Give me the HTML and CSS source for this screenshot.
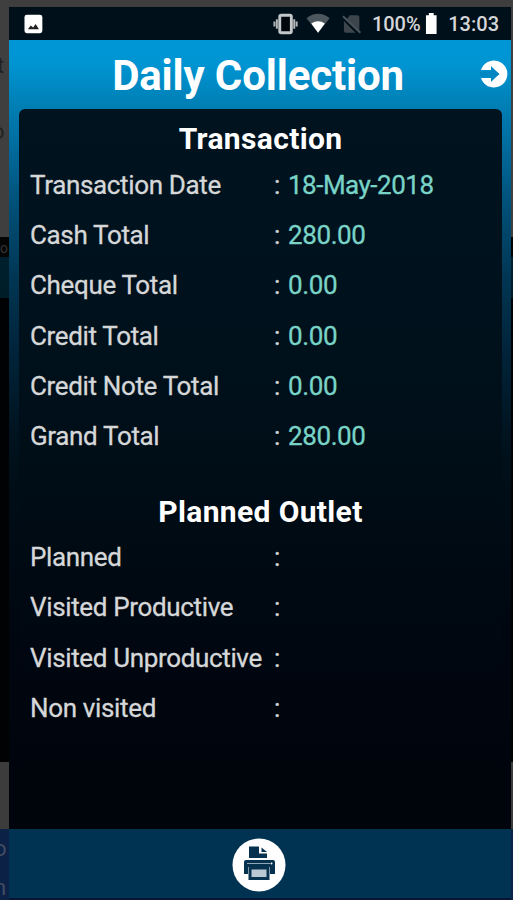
FILE: index.html
```
<!DOCTYPE html>
<html>
<head>
  <meta charset="utf-8">
  <title>Daily Collection</title>
  <link rel="stylesheet" href="styles.css">
</head>
<body>
  <!-- dimmed page behind the phone -->
  <div class="behind behind_left">
    <span class="ghost g1">t</span>
    <span class="ghost g2">o</span>
    <span class="ghost g3">o</span>
    <span class="ghost g4">o</span>
    <span class="ghost g5">n</span>
  </div>
  <div class="phone">
    <div class="statusbar">
      <svg class="picture" width="20" height="20" viewBox="0 0 20 20">
        <rect x="0.5" y="0.5" width="18.5" height="19" rx="2.5" fill="#fff"/>
        <path d="M4 15.5L7 11.5L9.5 13.5L12 10L15.5 15.5Z" fill="#222"/>
      </svg>
      <svg class="vibrate" width="26" height="24" viewBox="0 0 26 24">
        <rect x="7" y="3" width="12" height="18" rx="1.5" fill="#00060b" stroke="#c4c7c9" stroke-width="3"/>
        <path d="M4 7V17M22 7V17M1.5 9.5V14.5M24.5 9.5V14.5" stroke="#b4b8ba" stroke-width="2" fill="none"/>
      </svg>
      <svg class="wifi" width="25" height="21" viewBox="0 0 25 21">
        <path d="M0.5 5Q12.5 -4 24.5 5L12.5 20Z" fill="#4b565d"/>
        <path d="M5.5 10.5Q12.5 6 19.500 10.5L12.5 20Z" fill="#fff"/>
      </svg>
      <svg class="nosim" width="20" height="20" viewBox="0 0 20 20">
        <path d="M8 1H16Q18 1 18 3V17L5 5ZM2 7L14 19H4Q2 19 2 17Z" fill="#3c454b"/>
        <path d="M1 2L19 19" stroke="#4b555b" stroke-width="2"/>
      </svg>
      <span class="percent">100%</span>
      <svg class="battery" width="13" height="23" viewBox="0 0 13 23">
        <path d="M4 0.5H9V3H12V22.5H1V3H4Z" fill="#fff"/>
      </svg>
      <span class="clock">13:03</span>
    </div>

    <div class="main">
      <div class="header">
        <h1>Daily Collection</h1>
        <svg class="go" width="28" height="28" viewBox="0 0 28 28">
          <path d="M1 10A13.500 13.500 0 1 1 1 18H11V22L19 14L11 6V10Z" fill="#fff"/>
          <path d="M0 11.500H11V7L19.500 14L11 21V16.500H0Z" fill="#0087c2"/>
        </svg>
      </div>
      <div class="panel">
        <h2>Transaction</h2>
        <div class="row"><span class="label">Transaction Date</span><span class="colon">:</span><span class="value date">18-May-2018</span></div>
        <div class="row"><span class="label">Cash Total</span><span class="colon">:</span><span class="value">280.00</span></div>
        <div class="row"><span class="label">Cheque Total</span><span class="colon">:</span><span class="value">0.00</span></div>
        <div class="row"><span class="label">Credit Total</span><span class="colon">:</span><span class="value">0.00</span></div>
        <div class="row"><span class="label">Credit Note Total</span><span class="colon">:</span><span class="value">0.00</span></div>
        <div class="row"><span class="label">Grand Total</span><span class="colon">:</span><span class="value">280.00</span></div>
        <h2 class="outlet">Planned Outlet</h2>
        <div class="row"><span class="label">Planned</span><span class="colon">:</span></div>
        <div class="row"><span class="label">Visited Productive</span><span class="colon">:</span></div>
        <div class="row"><span class="label">Visited Unproductive</span><span class="colon">:</span></div>
        <div class="row"><span class="label">Non visited</span><span class="colon">:</span></div>
      </div>
    </div>

    <div class="footer">
      <svg width="54" height="54" viewBox="0 0 54 54">
        <circle cx="27" cy="27" r="26.5" fill="#fff"/>
        <path d="M17 8.5H27V15.5H35V20H17Z" fill="#06314f"/>
        <path d="M29.5 9.5L35 14H29.5Z" fill="#06314f"/>
        <path d="M14 22H41Q43 22 43 24V36H38V29H16V36H12V24Q12 22 14 22Z" fill="#06314f"/>
        <path d="M15 25.5H38" stroke="#8fa7b7"/>
        <circle cx="39.5" cy="25.5" r="1" fill="#fff"/>
        <rect x="18" y="30" width="18" height="10.5" fill="#b9c8d2" stroke="#06314f" stroke-width="3"/>
      </svg>
    </div>
  </div>
  <div class="behind behind_right"></div>
</body>
</html>
```

FILE: styles.css
```
* { box-sizing: border-box; }
body {
   margin: 0; display: flex; height: 900px; overflow: hidden;
   background-color: #3e3e3e;
   font-family: Roboto, "Liberation Sans", sans-serif;
}
.behind {
   position: relative; flex: none; overflow: hidden;
   background: linear-gradient(#3f3f3f 237px, #050505 237px, #050505 257px,
      #00202e 257px, #001c29 298px, #000204 298px, #000204 762px,
      #3c3c3c 762px, #3c3c3c 829px, #0c2146 829px);
}
.behind_left { width: 9px; }
.behind_right { width: 2px; }
.ghost { position: absolute; font-size: 22px; line-height: 24px; color: #222; }
.g1 { left: -3px; top: 54px; }
.g2 { left: -8px; top: 120px; }
.g3 { left: 0; top: 236px; font-size: 14px; color: #333; }
.g4 { left: -6px; top: 837px; color: #414c62; }
.g5 { left: -6px; top: 876px; color: #414c62; }

.phone {
   width: 502px; height: 900px; padding-top: 7px;
   display: flex; flex-direction: column;
   background: linear-gradient(#3e3e3e 7px, #081633 7px);
}
.statusbar {
   height: 33px; flex: none; display: flex; align-items: center;
   padding: 0 12px 0 15px;
   background-color: #00101a; color: #d4d6d8;
   font-size: 20px; font-weight: 500;
}
.vibrate { margin-left: 230px; }
.wifi { margin-left: 8px; }
.nosim { margin-left: 11px; }
.percent { width: 50px; margin-left: 11px; }
.battery { margin-left: 4px; }
.clock { margin-left: 11px; }

.main {
   height: 789px; flex: none; padding: 0 9px 0 10px;
   background: linear-gradient(#0096d6 0px, #0094d2 25px, #007db2 69px,
      #0071a5 95px, #005078 165px, #003552 240px, #00243b 310px, #001420 390px,
      #000d17 450px, #00060f 600px, #00040c 789px);
}
.header {
   position: relative; height: 69px;
   display: flex; justify-content: center;
}
h1 {
   margin: 0; padding-right: 5px; color: #fff;
   font-size: 42px; font-weight: 700; line-height: 71px; white-space: nowrap;
   letter-spacing: -0.15px;
}
.go { position: absolute; right: -6px; top: 20px; }
.panel {
   height: 720px; padding: 5px 11px;
   border-radius: 6px 6px 0 0;
   background: linear-gradient(#00131f, #00111c 240px, #000c15 400px, #00060f 560px, #00040b);
}
h2 {
   margin: 0; height: 46px; color: #fff;
   font-size: 30px; font-weight: 700; line-height: 50px; text-align: center;
   letter-spacing: 0.35px;
}
.outlet { margin-top: 26px; height: 45px; }
.row {
   display: flex; height: 50.2px; line-height: 50px;
   font-size: 26px; color: #d6d7d8; white-space: nowrap;
   -webkit-text-stroke: 0.3px;
}
.label { width: 244px; letter-spacing: -0.35px; }
.colon { width: 14px; }
.value { color: #79d3c6; letter-spacing: -0.4px; }
.date { letter-spacing: -0.5px; }

.footer {
   height: 69px; flex: none; display: flex;
   justify-content: center; padding: 9px 2px 0 0;
   background-color: #003352;
}
```
